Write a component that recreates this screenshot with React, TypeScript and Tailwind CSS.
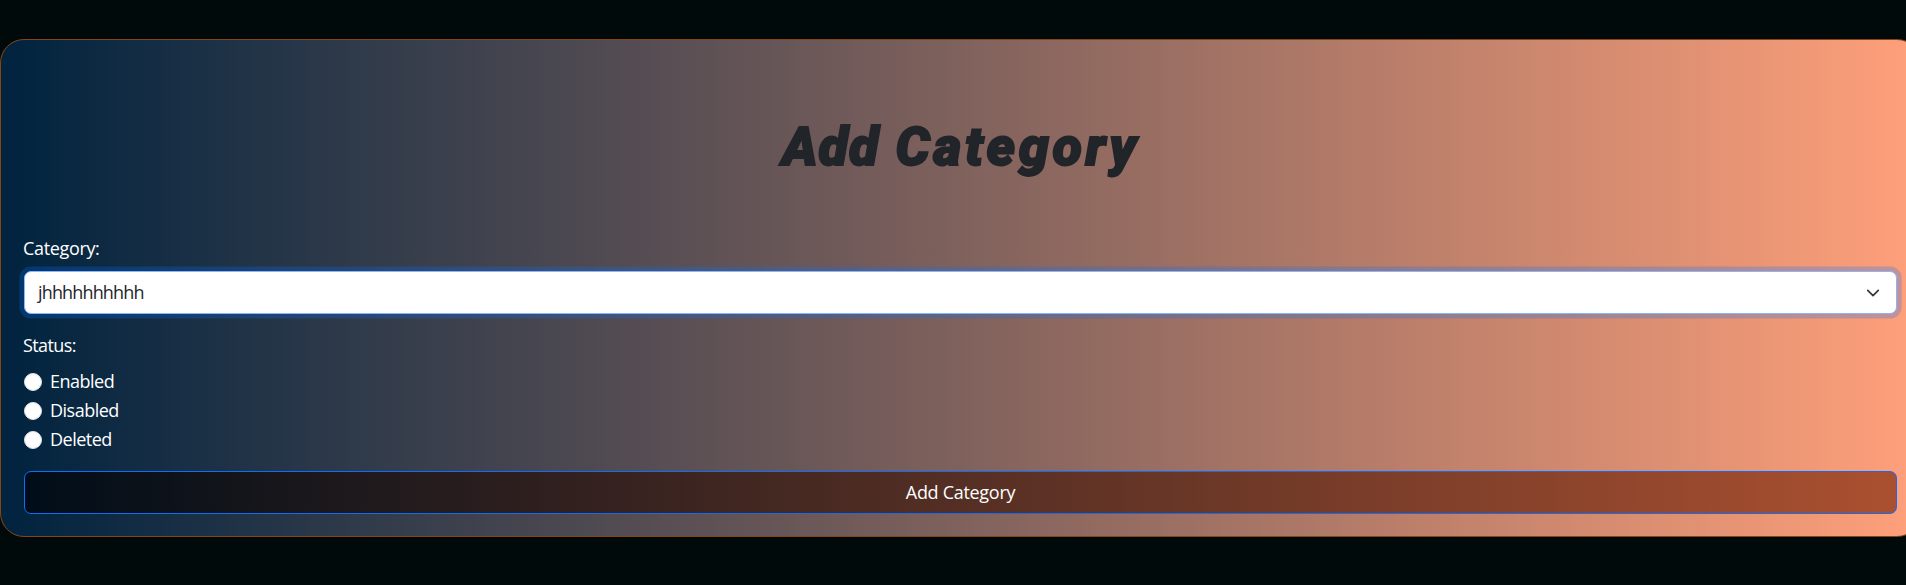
import React from "react";

const label = "text-white text-[18px] leading-[29px]";

function Radio({ text }: { text: string }) {
  return (
    <label className="flex h-[29px] items-center gap-[8px]">
      <input
        type="radio"
        name="status"
        className="m-0 h-[18px] w-[18px] shrink-0 appearance-none rounded-full border border-[#dee2e6] bg-white"
      />
      <span className={`tracking-[-0.5px] ${label}`}>{text}</span>
    </label>
  );
}

export default function App() {
  return (
    <div className="h-[585px] w-full overflow-hidden bg-[#010a0b] pt-[39px] font-['Open_Sans','Noto_Sans',sans-serif]">
      <form className="flex h-[498px] w-[1921px] flex-col rounded-[24px] border border-[#8b4513] bg-[linear-gradient(to_right,#00233f,#ffa07a)] px-[23px]">
        <h1 className="mt-[71px] flex h-[72px] justify-center gap-[16px] pr-[2px] font-['Roboto',sans-serif] text-[54px] leading-[72px] font-black italic text-[#212529] [-webkit-text-stroke:1.8px_#212529]">
          <span className="tracking-[1px]">Add</span>
          <span className="-mr-[3px] tracking-[3.6px]">Category</span>
        </h1>
        <label className={`mt-[51px] -ml-[1px] tracking-[-0.34px] ${label}`}>Category:</label>
        <div className="mt-[8px] flex h-[43px] shrink-0 items-center justify-between rounded-[7px] border border-[#86b7fe] bg-white pr-[16px] pl-[13px] text-[18px] tracking-[-0.85px] text-[#212529] shadow-[0_0_0_4.6px_rgba(13,110,253,0.25)]">
          <span>jhhhhhhhhhh</span>
          <svg viewBox="0 0 16 16" className="h-[14px] w-[14px]" fill="none" stroke="#343a40" strokeWidth="2" strokeLinecap="round" strokeLinejoin="round">
            <path d="m2 5 6 6 6-6" />
          </svg>
        </div>
        <div className={`mt-[17px] mb-[7px] -ml-[1px] tracking-[-0.6px] ${label}`}>Status:</div>
        <Radio text="Enabled" />
        <Radio text="Disabled" />
        <Radio text="Deleted" />
        <button
          type="button"
          className="mt-[17px] h-[43px] shrink-0 rounded-[7px] border border-[#0d6efd] bg-[linear-gradient(to_right,#000d18,#aa5030)] text-[18px] tracking-[-0.3px] text-white"
        >
          Add Category
        </button>
      </form>
    </div>
  );
}
